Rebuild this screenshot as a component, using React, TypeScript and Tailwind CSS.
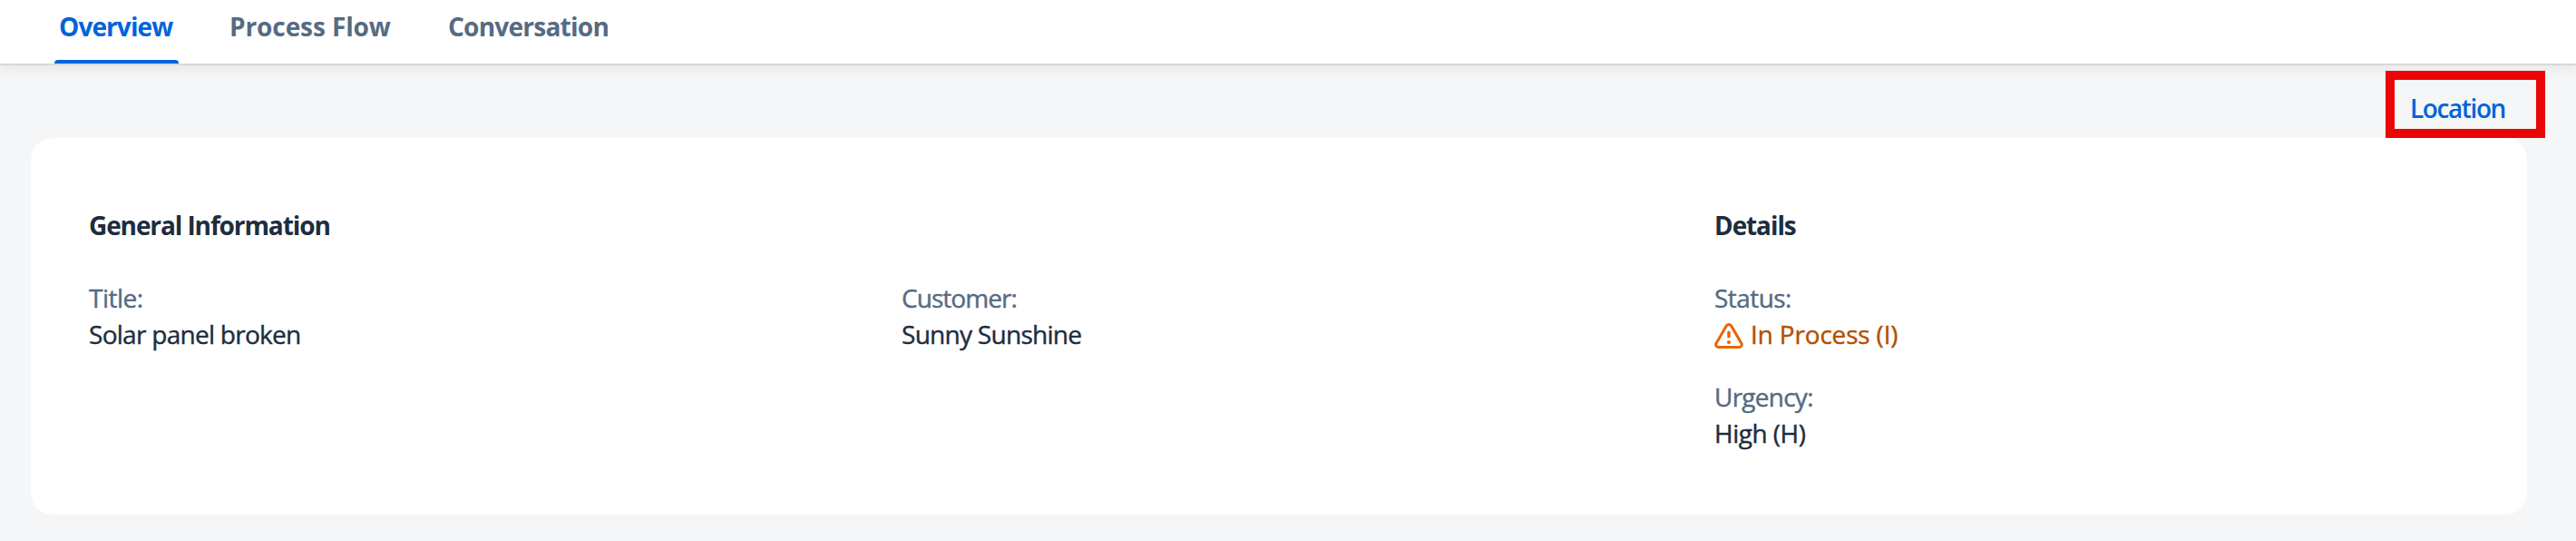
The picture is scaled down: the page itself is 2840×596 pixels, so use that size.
import type { ReactNode } from "react";

function Tab({ active = false, className, children }: { active?: boolean; className: string; children: ReactNode }) {
  return (
    <div className={`flex h-[70px] flex-col justify-between ${active ? "text-[#0064d9]" : "text-[#556b82]"} ${className}`}>
      <span className="whitespace-nowrap px-[5px] leading-[58px]">{children}</span>
      {active && <span className="h-1 rounded-t bg-[#0064d9]" />}
    </div>
  );
}

function Field({ label, labelClass, children }: { label: string; labelClass: string; children: ReactNode }) {
  return (
    <div className="text-[28px] leading-10 [-webkit-text-stroke:0.4px_currentColor]">
      <div className={`text-[#556b82] ${labelClass}`}>{label}</div>
      {children}
    </div>
  );
}

function WarningIcon() {
  return (
    <svg className="mt-1 h-7 w-8 shrink-0" viewBox="0 0 32 28" fill="none" stroke="#e76500" strokeWidth="3" strokeLinecap="round" strokeLinejoin="round">
      <path d="M13.3 3.1a3.2 3.2 0 0 1 5.4 0L29.9 22.3a2.7 2.7 0 0 1-2.4 4.1H4.5a2.7 2.7 0 0 1-2.4-4.1Z" />
      <path d="M16 10.2v4.6" strokeWidth="3.4" />
      <path d="M16 21.1v.01" strokeWidth="4" />
    </svg>
  );
}

export default function App() {
  return (
    <div className="h-[596px] w-[2840px] overflow-hidden bg-[#f5f6f7] font-['Open_Sans',sans-serif] text-[#1d2d3e]">
      <nav className="flex h-[72px] border-b-2 border-[#d9d9d9] bg-white pl-[60px] text-[28px] font-bold shadow-[0_4px_14px_rgba(34,53,72,0.08)]">
        <Tab active className="w-[137px] tracking-[-0.9px]">Overview</Tab>
        <Tab className="ml-[51px] w-[190px] tracking-[-0.1px]">Process Flow</Tab>
        <Tab className="ml-[51px] w-[190px] tracking-[-0.75px]">Conversation</Tab>
      </nav>
      <div className="flex h-20 justify-end pr-[34px] pt-1.5">
        <div className="h-[74px] w-[176px] border-10 border-[#ea0606] pl-[17px] text-[28px] font-semibold leading-[62px] tracking-[-1.4px] text-[#0064d9]">
          Location
        </div>
      </div>
      <main className="ml-[34px] grid h-[415px] w-[2752px] grid-cols-[896px_896px_896px] rounded-3xl bg-white pl-16 pt-[76px]">
        <section>
          <h2 className="mb-10 text-[28px] font-bold leading-10 tracking-[-1.1px]">General Information</h2>
          <Field label="Title:" labelClass="tracking-[-0.5px]">
            <div className="tracking-[-0.72px]">Solar panel broken</div>
          </Field>
        </section>
        <section className="pt-20">
          <Field label="Customer:" labelClass="tracking-[-0.95px]">
            <div className="tracking-[-0.72px]">Sunny Sunshine</div>
          </Field>
        </section>
        <section>
          <h2 className="mb-10 text-[28px] font-bold leading-10 tracking-[-1.1px]">Details</h2>
          <div className="flex flex-col gap-[29px]">
            <Field label="Status:" labelClass="tracking-[-0.55px]">
              <div className="flex items-center gap-2 text-[#b44f00]">
                <WarningIcon />
                <span className="tracking-[-0.17px]">In Process (I)</span>
              </div>
            </Field>
            <Field label="Urgency:" labelClass="tracking-[-0.75px]">
              <div className="tracking-[-0.5px]">High (H)</div>
            </Field>
          </div>
        </section>
      </main>
    </div>
  );
}
